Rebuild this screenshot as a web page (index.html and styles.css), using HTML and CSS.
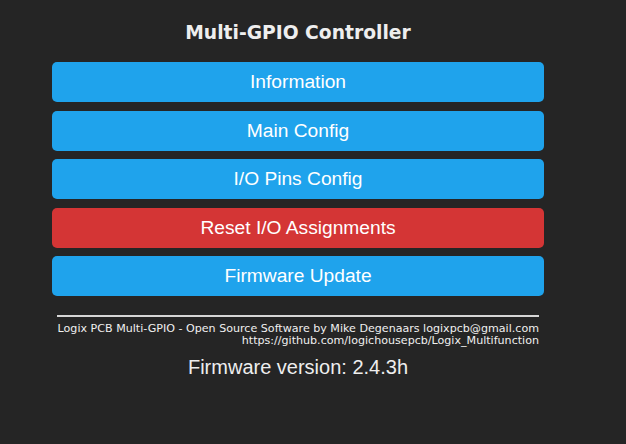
FILE: index.html
```html
<!DOCTYPE html>
<html>
<head>
<meta charset="utf-8">
<title>Multi-GPIO Controller</title>
<link rel="stylesheet" href="styles.css">
</head>
<body>
<div class="wrap">
  <h3 class="title">Multi-GPIO Controller</h3>
  <nav class="menu">
    <button class="btn">Information</button>
    <button class="btn">Main Config</button>
    <button class="btn">I/O Pins Config</button>
    <button class="btn btn-danger">Reset I/O Assignments</button>
    <button class="btn">Firmware Update</button>
  </nav>
  <hr class="rule">
  <div class="credits">
    <div>Logix PCB Multi-GPIO - Open Source Software by Mike Degenaars logixpcb@gmail.com</div>
    <div>https://github.com/logichousepcb/Logix_Multifunction</div>
  </div>
  <div class="version">Firmware version: 2.4.3h</div>
</div>
</body>
</html>
```
FILE: styles.css
```css
html, body {
  margin: 0;
  padding: 0;
  background: #252525;
  color: #eeeeee;
  font-family: "DejaVu Sans", Verdana, sans-serif;
}
body {
  height: 444px;
  overflow: hidden;
}
.wrap {
  width: 492px;
  margin-left: 52px;
  display: flex;
  flex-direction: column;
}
.title {
  margin: 21.5px 0 0;
  font-size: 18.72px;
  line-height: 22px;
  font-weight: bold;
  text-align: center;
  color: #eeeeee;
}
.menu {
  margin-top: 18.5px;
  display: flex;
  flex-direction: column;
  gap: 8.1px;
}
.btn {
  display: block;
  width: 100%;
  border: 0;
  border-radius: 5px;
  background: #1fa3ec;
  color: #ffffff;
  font-family: "Liberation Sans", Arial, sans-serif;
  font-size: 19.2px;
  line-height: 38.4px;
  padding: 1px 6px;
  text-align: center;
}
.btn-danger {
  background: #d43535;
}
.rule {
  margin: 18.6px 5px 0;
  border: 0;
  height: 2px;
  background: #d6d6d6;
}
.credits {
  margin: 5.8px 5px 0;
  font-size: 11.1px;
  line-height: 12.5px;
  text-align: right;
  white-space: nowrap;
  color: #f0f0f0;
}
.version {
  margin-top: 8.4px;
  font-family: "Liberation Sans", Arial, sans-serif;
  font-size: 20px;
  line-height: 23px;
  text-align: center;
  color: #eeeeee;
}
```
